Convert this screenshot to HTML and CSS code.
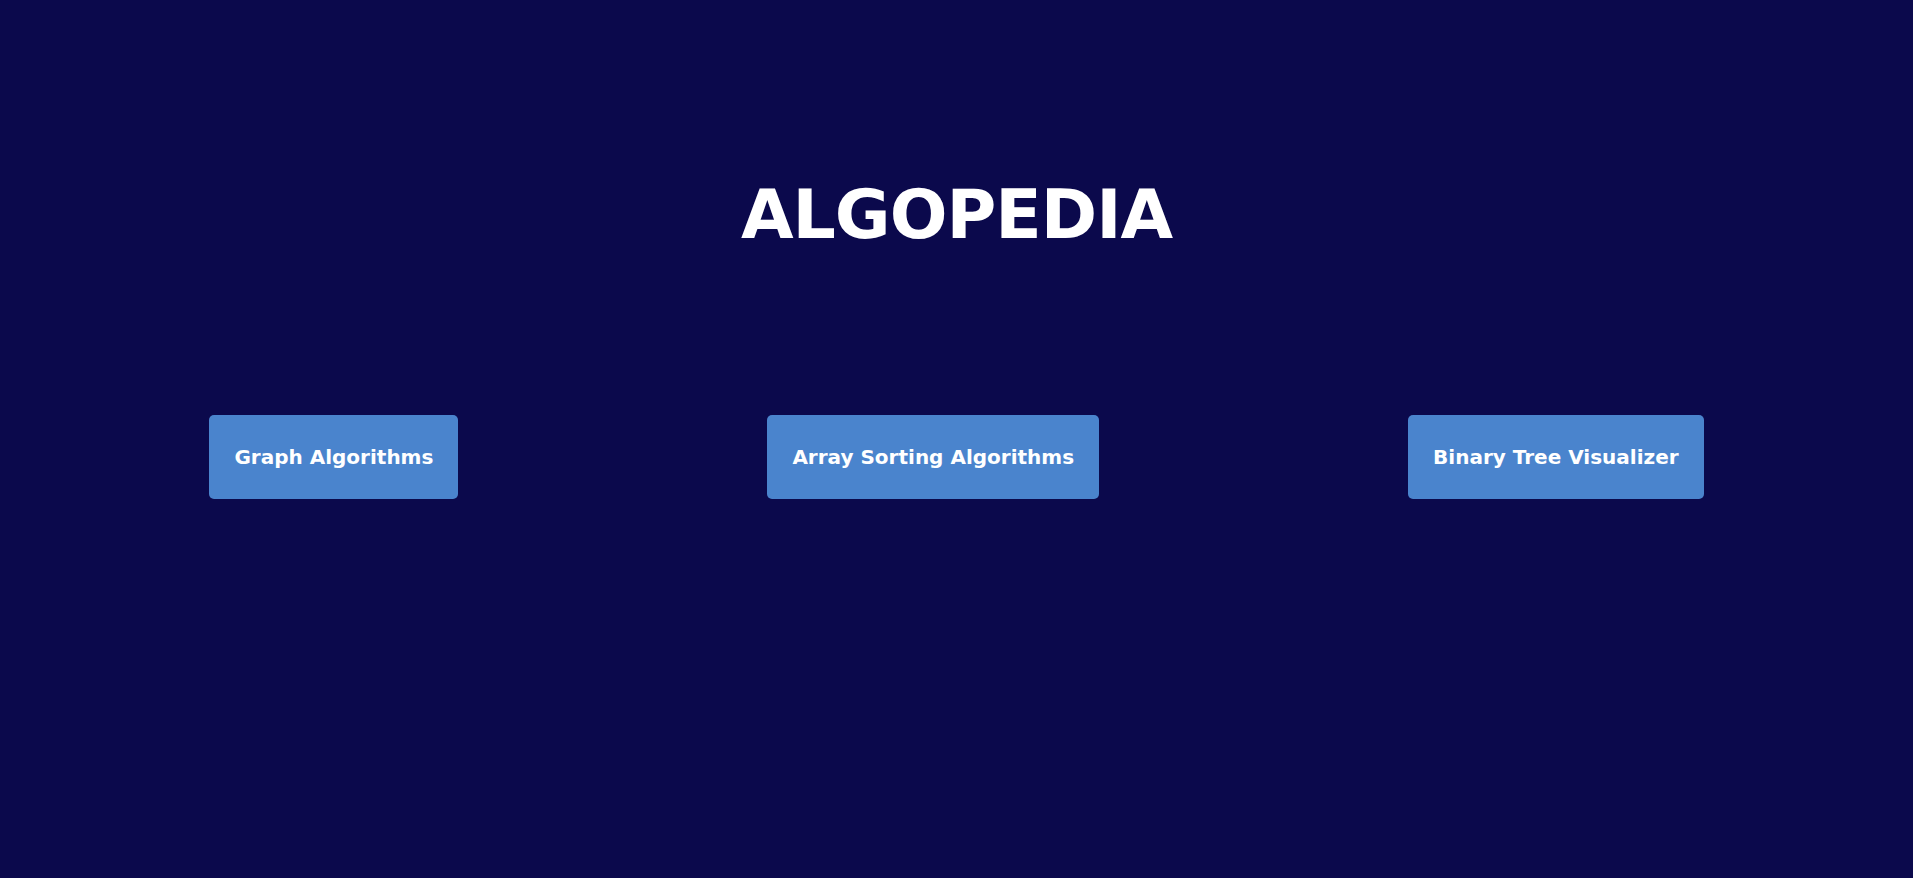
FILE: index.html
```html
<!DOCTYPE html>
<html lang="en">
<head>
<meta charset="utf-8">
<title>Algopedia</title>
<link rel="stylesheet" href="styles.css">
</head>
<body>
<main class="page">
  <h1 class="title">ALGOPEDIA</h1>
  <nav class="menu">
    <button class="menu-btn">Graph Algorithms</button>
    <button class="menu-btn">Array Sorting Algorithms</button>
    <button class="menu-btn">Binary Tree Visualizer</button>
  </nav>
</main>
</body>
</html>
```

FILE: styles.css
```css
html, body {
  margin: 0;
  padding: 0;
  height: 100%;
}
body {
  background: #0b094c;
  font-family: "DejaVu Sans", sans-serif;
  color: #ffffff;
}
.page {
  display: flex;
  flex-direction: column;
  align-items: center;
  padding-top: 170px;
}
.title {
  margin: 0;
  font-size: 68px;
  font-weight: 700;
  line-height: 90px;
  letter-spacing: -1px;
}
.menu {
  display: flex;
  justify-content: center;
  gap: 309px;
  margin-top: 155px;
  width: 100%;
}
.menu-btn {
  font-family: "DejaVu Sans", sans-serif;
  font-weight: 700;
  font-size: 20px;
  color: #ffffff;
  background: #4a84cd;
  border: none;
  border-radius: 5px;
  height: 84px;
  padding: 0 25px;
  cursor: pointer;
}
```
